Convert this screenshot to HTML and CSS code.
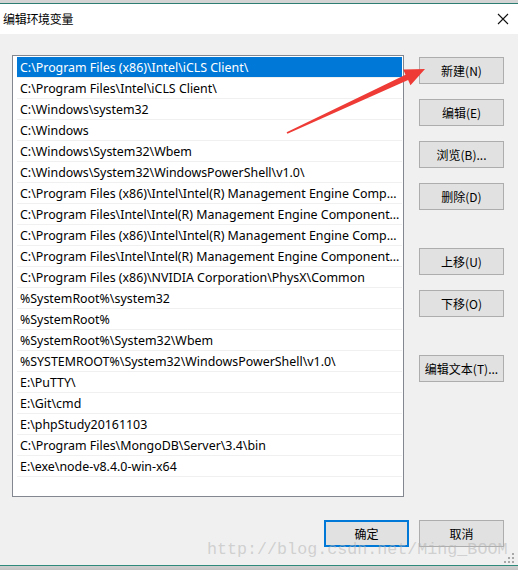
FILE: index.html
```html
<!DOCTYPE html>
<html>
<head>
<meta charset="utf-8">
<link rel="stylesheet" href="styles.css">
</head>
<body>
<div class="window">
  <div class="topedge"></div>
  <div class="titlebar">
    <span class="title">编辑环境变量</span>
    <svg class="close" width="12" height="12" viewBox="0 0 12 12"><path d="M1 1 L11 11 M11 1 L1 11" stroke="#111" stroke-width="1.1" fill="none"/></svg>
  </div>
  <div class="body">
    <div class="main">
      <div class="listbox">
        <div class="row selected">C:\Program Files (x86)\Intel\iCLS Client\</div>
        <div class="row">C:\Program Files\Intel\iCLS Client\</div>
        <div class="row">C:\Windows\system32</div>
        <div class="row">C:\Windows</div>
        <div class="row">C:\Windows\System32\Wbem</div>
        <div class="row">C:\Windows\System32\WindowsPowerShell\v1.0\</div>
        <div class="row">C:\Program Files (x86)\Intel\Intel(R) Management Engine Components\DAL</div>
        <div class="row">C:\Program Files\Intel\Intel(R) Management Engine Components\DAL</div>
        <div class="row">C:\Program Files (x86)\Intel\Intel(R) Management Engine Components\IPT</div>
        <div class="row">C:\Program Files\Intel\Intel(R) Management Engine Components\IPT</div>
        <div class="row">C:\Program Files (x86)\NVIDIA Corporation\PhysX\Common</div>
        <div class="row">%SystemRoot%\system32</div>
        <div class="row">%SystemRoot%</div>
        <div class="row">%SystemRoot%\System32\Wbem</div>
        <div class="row">%SYSTEMROOT%\System32\WindowsPowerShell\v1.0\</div>
        <div class="row">E:\PuTTY\</div>
        <div class="row">E:\Git\cmd</div>
        <div class="row">E:\phpStudy20161103</div>
        <div class="row">C:\Program Files\MongoDB\Server\3.4\bin</div>
        <div class="row">E:\exe\node-v8.4.0-win-x64</div>
      </div>
      <div class="sidebtns">
        <button class="btn">新建(N)</button>
        <button class="btn">编辑(E)</button>
        <button class="btn">浏览(B)...</button>
        <button class="btn">删除(D)</button>
        <button class="btn gap-lg">上移(U)</button>
        <button class="btn">下移(O)</button>
        <button class="btn gap-lg">编辑文本(T)...</button>
      </div>
    </div>
    <div class="footer">
      <button class="btn default">确定</button>
      <button class="btn">取消</button>
    </div>
  </div>
  <div class="bottomedge"></div>
  <div class="watermark">http://blog.csdn.net/Ming_BOOM</div>
  <div class="grip">
    <i style="left:8px;top:0"></i>
    <i style="left:4px;top:4px"></i><i style="left:8px;top:4px"></i>
    <i style="left:0;top:8px"></i><i style="left:4px;top:8px"></i><i style="left:8px;top:8px"></i>
  </div>
  <svg class="arrow" width="518" height="570" viewBox="0 0 518 570">
    <polygon points="286.6,132.2 405.5,74.7 403.2,69.6 425,69 410.5,85.2 408.1,80.1 287.4,133.8" fill="#ee3b36"/>
  </svg>
</div>
</body>
</html>
```
FILE: styles.css
```css
* { box-sizing: border-box; }
html, body { margin: 0; padding: 0; }
body {
  width: 518px;
  height: 570px;
  overflow: hidden;
  font-family: "Noto Sans", "Noto Sans CJK SC", sans-serif;
  font-size: 12px;
  color: #000;
}
.window {
  position: relative;
  width: 518px;
  height: 570px;
  display: flex;
  flex-direction: column;
  background: #f0f0f0;
}
.topedge {
  height: 4px;
  background: #d4d4d4;
  border-bottom: 1px solid #2e7d72;
}
.titlebar {
  height: 30px;
  background: #fff;
  display: flex;
  align-items: center;
  justify-content: space-between;
  padding: 0 9px 0 3px;
}
.title {
  font-family: "Noto Sans CJK SC", sans-serif;
  font-size: 12px;
  letter-spacing: -0.3px;
  position: relative;
  top: -1px;
}
.close { display: block; }
.body {
  flex: 1;
  display: flex;
  flex-direction: column;
  padding: 21px 0 0 12px;
}
.main {
  display: flex;
  align-items: flex-start;
}
.listbox {
  width: 392px;
  height: 442px;
  border: 1px solid #828790;
  background: #fff;
  padding: 1px 1px 1px 4px;
}
.row {
  height: 21px;
  line-height: 20px;
  padding-top: 1px;
  padding-left: 3px;
  border-bottom: 1px solid #f0f0f0;
  white-space: nowrap;
  overflow: hidden;
  text-overflow: ellipsis;
  font-family: "Noto Sans", "Noto Sans CJK SC", sans-serif;
  font-size: 12.4px;
}
.row.selected {
  background: #0078d7;
  color: #fff;
}
.sidebtns {
  display: flex;
  flex-direction: column;
  gap: 15px;
  margin-left: 15px;
  padding-top: 2px;
}
.btn {
  width: 85px;
  height: 27px;
  background: #e1e1e1;
  border: 1px solid #adadad;
  font-family: "Noto Sans CJK SC", sans-serif;
  font-size: 12px;
  color: #000;
  padding: 0;
  margin: 0;
}
.sidebtns .gap-lg { margin-top: 23px; }
.footer {
  display: flex;
  gap: 10px;
  justify-content: flex-end;
  padding-right: 14px;
  margin-top: 23px;
}
.btn.default {
  border: 2px solid #0078d7;
}
.bottomedge {
  height: 5px;
  border-top: 1px solid #2e8a7a;
  background: linear-gradient(#cfcfcf, #c4c4c4);
}
.watermark {
  position: absolute;
  left: 207px;
  top: 540px;
  font-family: "Liberation Mono", monospace;
  font-size: 16.7px;
  line-height: 20px;
  color: rgba(180, 180, 180, 0.55);
  white-space: nowrap;
  pointer-events: none;
}
.grip {
  position: absolute;
  left: 504px;
  top: 553px;
  width: 10px;
  height: 10px;
}
.grip i {
  position: absolute;
  width: 2px;
  height: 2px;
  background: #a8a8a8;
}
.arrow {
  position: absolute;
  left: 0;
  top: 0;
  pointer-events: none;
}
```
